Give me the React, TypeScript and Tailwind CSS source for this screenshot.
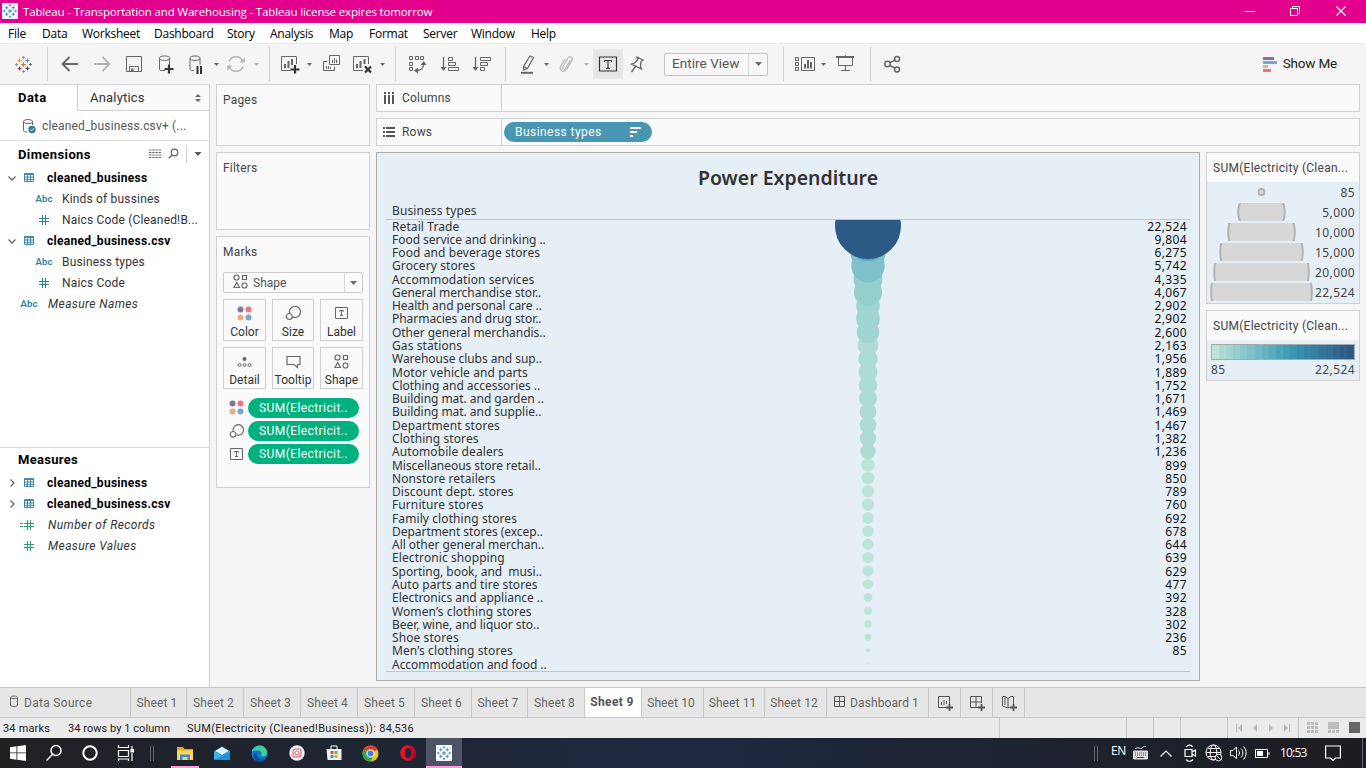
import React from "react";

const PALETTE = [
  "#bce4d8", "#aedcd5", "#a1d5d2", "#95cecf", "#89c8cc", "#7ec1ca", "#72bac6", "#66b2c2", "#59acbe", "#4ba5ba",
  "#419eb6", "#3b96b2", "#358ead", "#3586a7", "#347ea1", "#32779b", "#316f96", "#2f6790", "#2d608a", "#2c5985",
];

const ROWS: [string, number | null][] = [
  ["Retail Trade", 22524],
  ["Food service and drinking ..", 9804],
  ["Food and beverage stores", 6275],
  ["Grocery stores", 5742],
  ["Accommodation services", 4335],
  ["General merchandise stor..", 4067],
  ["Health and personal care ..", 2902],
  ["Pharmacies and drug stor..", 2902],
  ["Other general merchandis..", 2600],
  ["Gas stations", 2163],
  ["Warehouse clubs and sup..", 1956],
  ["Motor vehicle and parts", 1889],
  ["Clothing and accessories ..", 1752],
  ["Building mat. and garden ..", 1671],
  ["Building mat. and supplie..", 1469],
  ["Department stores", 1467],
  ["Clothing stores", 1382],
  ["Automobile dealers", 1236],
  ["Miscellaneous store retail..", 899],
  ["Nonstore retailers", 850],
  ["Discount dept. stores", 789],
  ["Furniture stores", 760],
  ["Family clothing stores", 692],
  ["Department stores (excep..", 678],
  ["All other general merchan..", 644],
  ["Electronic shopping", 639],
  ["Sporting, book, and  musi..", 629],
  ["Auto parts and tire stores", 477],
  ["Electronics and appliance ..", 392],
  ["Women’s clothing stores", 328],
  ["Beer, wine, and liquor sto..", 302],
  ["Shoe stores", 236],
  ["Men’s clothing stores", 85],
  ["Accommodation and food ..", null],
];

const PITCH = 451 / 34;

type IconProps = { children: React.ReactNode; size?: number; className?: string };

function Icon({ children, size = 24, className = "" }: IconProps) {
  return (
    <svg
      width={size}
      height={size}
      viewBox={`0 0 ${size} ${size}`}
      fill="none"
      stroke="#666"
      className={`block shrink-0 overflow-visible ${className}`}
    >
      {children}
    </svg>
  );
}

function Cell({ w, children }: { w: string; children: React.ReactNode }) {
  return <div className={`${w} h-full shrink-0 flex items-center justify-center`}>{children}</div>;
}

function Sep({ m }: { m: string }) {
  return <div className={`w-px h-[34px] shrink-0 bg-[#cfcfcf] ${m}`} />;
}

function Caret({ light = false }: { light?: boolean }) {
  return (
    <svg width="5" height="3" viewBox="0 0 5 3" className="block">
      <path d="M0 0H5L2.5 3Z" fill={light ? "#b4b4b4" : "#666"} />
    </svg>
  );
}

/* Tableau mark: a large centre cross surrounded by smaller ones */
function TableauMark({ mono = false, size = 17 }: { mono?: boolean; size?: number }) {
  const c = (x: string) => (mono ? "#3a80aa" : x);
  const cross = (x: number, y: number, r: number, col: string, w: number) => (
    <path d={`M${x - r} ${y}H${x + r}M${x} ${y - r}V${y + r}`} stroke={c(col)} strokeWidth={w} />
  );
  return (
    <svg width={size} height={size} viewBox="0 0 17 17" fill="none" className="block shrink-0">
      {cross(8.5, 8.5, 2.5, "#e8762c", 1.1)}
      {cross(4.5, 4.5, 2, "#eb9129", 1)}
      {cross(12.5, 4.5, 2, "#59879b", 1)}
      {cross(4.5, 12.5, 2, "#c72035", 1)}
      {cross(12.5, 12.5, 2, "#1f447e", 1)}
      {cross(8.5, 1.5, 1.5, "#7099a6", 0.9)}
      {cross(8.5, 15.5, 1.5, "#7b85b1", 0.9)}
      {cross(1.5, 8.5, 1.5, "#5b9bb5", 0.9)}
      {cross(15.5, 8.5, 1.5, "#5b6591", 0.9)}
    </svg>
  );
}

const MENUS: [string, string][] = [
  ["File", "w-[34px]"], ["Data", "w-[40px]"], ["Worksheet", "w-[72px]"], ["Dashboard", "w-[73px]"],
  ["Story", "w-[43px]"], ["Analysis", "w-[59px]"], ["Map", "w-[40px]"], ["Format", "w-[54px]"],
  ["Server", "w-[48px]"], ["Window", "w-[60px]"], ["Help", "w-[40px]"],
];

function TitleBar() {
  return (
    <div className="h-[23px] shrink-0 bg-[#e3008c] flex items-center text-white font-['Open_Sans',sans-serif]">
      <div className="ml-[2px] w-[16px] h-[16px] bg-[#f3f6f8] flex items-center justify-center -mt-[2px]">
        <TableauMark mono size={14} />
      </div>
      <span className="ml-[5px] text-[11.5px] tracking-[-0.150px] whitespace-pre leading-none mt-px">
        Tableau - Transportation and Warehousing - Tableau license expires tomorrow
      </span>
      <div className="ml-auto flex items-center mr-[17px] -mt-[2px]">
        <svg width="104" height="12" viewBox="0 0 104 12" fill="none" stroke="#fff" className="block">
          <path d="M0 6.5H10" />
          <path d="M45.5 3.5H52.5V10.5H45.5ZM47.5 3.5V1.5H54.5V8.5H52.5" />
          <path d="M91.5 1.5L100.5 10.5M100.5 1.5L91.5 10.5" strokeWidth="1.1" />
        </svg>
      </div>
    </div>
  );
}

function MenuBar() {
  return (
    <div className="h-[20px] shrink-0 bg-white flex items-center pt-[2px] pl-[8px] text-[12px] text-black tracking-[-0.25px] leading-none font-['Open_Sans',sans-serif]">
      {MENUS.map(([t, w]) => (
        <div key={t} className={`${w} shrink-0`}>{t}</div>
      ))}
    </div>
  );
}

function Toolbar() {
  return (
    <div className="h-[41px] shrink-0 bg-[#f5f5f5] border-t border-[#ececec] flex items-center text-[#333]">
      <Cell w="w-[47px]"><TableauMark size={17} /></Cell>
      <Sep m="mr-[6px]" />
      <Cell w="w-[32px]"><Icon><path d="M4.5 12H20M11.5 5L4.5 12L11.5 19" strokeWidth="1.8" /></Icon></Cell>
      <Cell w="w-[32px]"><Icon><path d="M4 12H19.5M12.5 5L19.5 12L12.5 19" stroke="#b4b4b4" strokeWidth="1.8" /></Icon></Cell>
      <Cell w="w-[32px]"><Icon><path d="M4.5 4.5H19.5V19.5H4.5ZM7.5 19.5V14.5H16.5V19.5" /><path d="M9 16.5H11.5V19.5H9Z" fill="#666" stroke="none" /></Icon></Cell>
      <Cell w="w-[32px]"><Icon>
        <path d="M11 18.5H7C5.5 18.3 5.5 17.5 5.5 17V6.5M15.5 6.5V12.5" />
        <ellipse cx="10.5" cy="6.2" rx="5" ry="2.2" />
        <path d="M15 12.5V21.5M10.500 17H19.5" stroke="#333" strokeWidth="2.2" />
      </Icon></Cell>
      <Cell w="w-[28px]"><Icon>
        <path d="M10 18.500H7.5C6 18.3 6 17.5 6 17V6.5M16 6.5V12.5" />
        <ellipse cx="11" cy="6.2" rx="5" ry="2.2" />
        <path d="M13.500 14V22M17 14V22" stroke="#333" strokeWidth="2" />
      </Icon></Cell>
      <Cell w="w-[12px]"><Caret /></Cell>
      <Cell w="w-[28px]"><Icon>
        <path d="M5 9.500A7.500 7.500 0 0 1 19 9.500M19 14.500A7.500 7.500 0 0 1 5 14.500" stroke="#b4b4b4" strokeWidth="1.5" />
        <path d="M20.800 5.500V10.500H15.500ZM3.200 18.500V13.500H8.500Z" fill="#b4b4b4" stroke="none" />
      </Icon></Cell>
      <Cell w="w-[13px]"><Caret light /></Cell>
      <Sep m="ml-[6px] mr-[5px]" />
      <Cell w="w-[28px]"><Icon>
        <path d="M13.5 18.5H4.5V4.5H19.5V12" />
        <path d="M8 12V16M11.500 9V16M15 7V13" strokeWidth="2" />
        <path d="M18 13V21.500M13.500 17.500H22.500" stroke="#333" strokeWidth="2.2" />
      </Icon></Cell>
      <Cell w="w-[13px]"><Caret /></Cell>
      <Cell w="w-[30px]"><Icon>
        <path d="M10.500 3.500H20.500V12.500H10.500ZM8.500 9.500H4.500V18.500H15.500V14.500" />
        <path d="M13.500 8V11M15.500 6V11M17.500 7.500V11M7.500 14V17M9.500 14V17M11.500 15V17" />
      </Icon></Cell>
      <Cell w="w-[30px]"><Icon>
        <path d="M14 18.500H4.500V4.500H19.500V12" />
        <path d="M8 12V16M11.500 9V16M15.500 7V12" strokeWidth="2" />
        <path d="M16 14.500L22 20.500M22 14.500L16 20.500" stroke="#333" strokeWidth="2.200" />
      </Icon></Cell>
      <Cell w="w-[12px]"><Caret /></Cell>
      <Sep m="ml-[7px] mr-[5px]" />
      <Cell w="w-[32px]"><Icon>
        <path d="M4.500 4.500H7.500V7.500H4.500ZM10.500 4.500H13.500V7.500H10.500ZM15.500 4.500H18.500V7.500H15.500ZM4.500 10.500H7.500V13.500H4.500ZM4.500 15.500H7.500V18.500H4.500Z" />
        <path d="M18.500 12C18.500 16 16 18.500 11 18.500" strokeWidth="1.3" />
        <path d="M15.500 13L18.800 9L21.500 13ZM13 15.500L9 18.500L13 21.500Z" fill="#666" stroke="none" />
      </Icon></Cell>
      <Cell w="w-[32px]"><Icon>
        <path d="M6.500 5V18" strokeWidth="1.300" /><path d="M3.500 15L6.500 19L9.500 15Z" fill="#666" stroke="none" />
        <path d="M11.500 5.500H15.500V8.500H11.500ZM11.500 10.500H18.500V13.500H11.500ZM11.500 15.500H21.500V18.500H11.500Z" />
      </Icon></Cell>
      <Cell w="w-[32px]"><Icon>
        <path d="M6.500 5V18" strokeWidth="1.300" /><path d="M3.500 15L6.500 19L9.500 15Z" fill="#666" stroke="none" />
        <path d="M11.500 5.500H21.500V8.500H11.500ZM11.500 10.500H18.500V13.500H11.500ZM11.500 15.500H15.500V18.500H11.500Z" />
      </Icon></Cell>
      <Sep m="ml-[8px] mr-[8px]" />
      <Cell w="w-[26px]"><Icon>
        <path d="M15 4L18.500 5.500L12.500 16.500L8.500 18L8.500 14.500ZM8.500 14.500L12.500 16.500" strokeWidth="1.200" />
        <path d="M6 20.800H18" strokeWidth="2" />
      </Icon></Cell>
      <Cell w="w-[12px]"><Caret /></Cell>
      <Cell w="w-[28px]"><Icon>
        <path d="M16.500 8L11.500 16.500C10.500 18 8 17 9 14.800L14 6C15.500 3.500 19.500 5 18 8.500L12.500 17.500C10 21 4.500 18.500 7 13.800L11 7" stroke="#b4b4b4" strokeWidth="1.200" />
      </Icon></Cell>
      <Cell w="w-[13px]"><Caret light /></Cell>
      <div className="w-[30px] h-[30px] shrink-0 bg-[#e6e6e6] flex items-center justify-center">
        <Icon>
          <path d="M3.500 5H20.500V19H3.500Z" stroke="#333" strokeWidth="1.200" />
          <path d="M8.500 10V8.500H15.500V10M12 8.500V16.500M10 16.500H14" stroke="#444" strokeWidth="1.200" />
        </Icon>
      </div>
      <Cell w="w-[28px]"><Icon>
        <path d="M12 5L18 8L16 9.500L15.500 14L16.500 17L6.500 12L9.500 11L12.500 8ZM10.500 14.500L6.500 20" strokeWidth="1.300" />
      </Icon></Cell>
      <div className="ml-[13px] w-[104px] h-[23px] shrink-0 border border-[#c4c4c4] rounded-[2px] bg-[#f8f8f8] flex items-center">
        <span className="flex-1 pl-[7px] text-[13.500px] leading-none text-[#555] font-['Roboto',sans-serif] tracking-[0.050px] whitespace-nowrap">Entire View</span>
        <div className="w-[19px] h-full border-l border-[#d8d8d8] flex items-center justify-center">
          <svg width="7" height="4" viewBox="0 0 7 4"><path d="M0 0H7L3.500 4Z" fill="#666" /></svg>
        </div>
      </div>
      <Sep m="ml-[15px] mr-[8px]" />
      <Cell w="w-[26px]"><Icon>
        <path d="M2.500 5.500H5.500V8.500H2.500ZM2.500 10.500H5.500V13.500H2.500ZM2.500 15.500H5.500V18.500H2.500ZM8.500 5.500H21.500V18.500H8.500Z" />
        <path d="M12 12V16.500M15 8V16.500M18 10V16.500" strokeWidth="2" />
      </Icon></Cell>
      <Cell w="w-[11px]"><Caret /></Cell>
      <Cell w="w-[32px]"><Icon>
        <path d="M3 5H21" strokeWidth="2" /><path d="M5.500 5V13.500H19.500V5M12.500 13.500V18.500M8 18.500H17M12.500 3V5" />
      </Icon></Cell>
      <Sep m="ml-[9px] mr-[5px]" />
      <Cell w="w-[32px]"><Icon>
        <g strokeWidth="1.500"><circle cx="7.500" cy="12" r="2.700" /><circle cx="17" cy="7" r="2.500" /><circle cx="17" cy="17.500" r="2.500" />
        <path d="M10 10.700L14.700 8.300M10 13.300L14.700 16" /></g>
      </Icon></Cell>
      <div className="ml-auto mr-[29px] flex items-center gap-[5px]">
        <svg width="15" height="15" viewBox="0 0 15 15" className="block">
          <path d="M0 0H11V3H0Z" fill="#83759a" /><path d="M0 4H14V7H0Z" fill="#7fa3cf" />
          <path d="M0 8H5V11H0Z" fill="#f1a98a" /><path d="M0 12H8V15H0Z" fill="#f27183" />
        </svg>
        <span className="text-[13.500px] leading-none text-[#222] font-['Roboto',sans-serif] tracking-[-0.200px] whitespace-nowrap">Show Me</span>
      </div>
    </div>
  );
}

function TableIcon() {
  return (
    <svg width="10" height="9" viewBox="0 0 10 9" fill="none" stroke="#2f7d9b" className="block">
      <path d="M.5 .500H9.500V8.500H.500ZM0 1.500H10M0 4H10M0 6.300H10M3.500 2V8.500M6.500 2V8.500" strokeWidth=".9" />
    </svg>
  );
}

function Hash({ color, eq = false }: { color: string; eq?: boolean }) {
  return (
    <svg width="10" height="10" viewBox="0 0 10 10" fill="none" stroke={color} className="block overflow-visible">
      <path d="M3.500 0V10M6.500 0V10M0 3.500H10M0 6.500H10" strokeWidth="1.050" />
      {eq && <path d="M-4 3.500H-1M-4 6.500H-1" />}
    </svg>
  );
}

function Abc() {
  return <span className="text-[9.500px] font-semibold text-[#2f7d9b] leading-none tracking-[0.100px]">Abc</span>;
}

function Folder({ name, open = false }: { name: string; open?: boolean }) {
  return (
    <div className="h-[21px] flex items-center">
      <div className="w-[23px] flex justify-center">
        <svg width="8" height="8" viewBox="0 0 8 8" fill="none" stroke="#666" strokeWidth="1.300" className="block">
          <path d={open ? "M.500 2.500L4 6L7.500 2.500" : "M2.500 .500L6 4L2.500 7.500"} />
        </svg>
      </div>
      <div className="w-[24px] pl-px"><TableIcon /></div>
      <span className="text-[12px] font-bold text-black tracking-[0.280px] whitespace-nowrap">{name}</span>
    </div>
  );
}

function Field({ name, icon, child = true, italic = false }: { name: string; icon: React.ReactNode; child?: boolean; italic?: boolean }) {
  return (
    <div className="h-[21px] flex items-center">
      <div className={`${child ? "w-[62px] pl-[26px]" : "w-[47px] pl-[11px]"} shrink-0 flex justify-center`}>
        <div className="w-[36px] flex justify-center">{icon}</div>
      </div>
      <span className={`text-[12px] text-[#333] whitespace-nowrap ${italic ? "italic tracking-[0.400px] pl-px" : "tracking-[0.180px]"}`}>{name}</span>
    </div>
  );
}

function DataPane() {
  return (
    <div className="w-[210px] shrink-0 bg-white border-r border-[#d0d0d0] flex flex-col font-['Roboto',sans-serif] leading-none">
      <div className="h-[27px] shrink-0 flex border-t border-[#d4d4d4]">
        <div className="w-[77px] pl-[18px] pb-[2px] flex items-center text-[13px] font-bold text-black tracking-[0.450px]">Data</div>
        <div className="flex-1 bg-[#fafafa] border-l border-b border-[#d0d0d0] pl-[12px] pr-[8px] flex items-center justify-between text-[13px] text-[#333] tracking-[0.200px]">
          Analytics
          <svg width="6" height="8" viewBox="0 0 6 8" className="block"><path d="M0 3L3 0L6 3ZM0 5L3 8L6 5Z" fill="#666" /></svg>
        </div>
      </div>
      <div className="h-[30px] shrink-0 border-b border-[#e0e0e0] flex items-center pl-[22px]">
        <svg width="14" height="16" viewBox="0 0 14 16" fill="none" stroke="#666" className="block">
          <ellipse cx="6" cy="3.500" rx="4.500" ry="2" /><path d="M1.500 3.500V12.500C1.500 13.500 3 14 5 14M10.500 3.500V7" />
          <circle cx="10" cy="11.500" r="3.700" fill="#2f7d9b" stroke="none" /><path d="M8.300 11.500L9.700 12.900L12 10.300" stroke="#fff" />
        </svg>
        <span className="ml-[6px] text-[12px] text-[#555] tracking-[0.170px] whitespace-nowrap">cleaned_business.csv+ (...</span>
      </div>
      <div className="h-[26px] shrink-0 flex items-center pl-[18px] pr-[7px]">
        <span className="flex-1 text-[13px] font-bold text-black tracking-[0.400px]">Dimensions</span>
        <svg width="54" height="18" viewBox="0 0 54 18" fill="none" stroke="#666" className="block">
          <path d="M1 5H13M1 7.500H13M1 10H13M1 12.500H13" strokeDasharray="2.400 .800" strokeWidth="1.100" />
          <circle cx="26.500" cy="7.500" r="3.300" strokeWidth="1.200" /><path d="M24.200 10L20.700 13.200" strokeWidth="1.500" />
          <path d="M38.500 0V18" stroke="#ccc" /><path d="M46.500 7H53.500L50 11Z" fill="#555" stroke="none" />
        </svg>
      </div>
      <div className="h-[280px] shrink-0 flex flex-col">
        <Folder name="cleaned_business" open />
        <Field name="Kinds of bussines" icon={<Abc />} />
        <Field name="Naics Code (Cleaned!B..." icon={<Hash color="#2f7d9b" />} />
        <Folder name="cleaned_business.csv" open />
        <Field name="Business types" icon={<Abc />} />
        <Field name="Naics Code" icon={<Hash color="#2f7d9b" />} />
        <Field name="Measure Names" icon={<Abc />} child={false} italic />
      </div>
      <div className="flex-1 border-t border-[#dcdcdc]">
        <div className="h-[24px] flex items-center pb-[2px] pl-[18px] text-[13px] font-bold text-black tracking-[0.300px]">Measures</div>
        <Folder name="cleaned_business" />
        <Folder name="cleaned_business.csv" />
        <Field name="Number of Records" icon={<Hash color="#2e9b77" eq />} child={false} italic />
        <Field name="Measure Values" icon={<Hash color="#2e9b77" />} child={false} italic />
      </div>
    </div>
  );
}

function ColorDots() {
  return (
    <svg width="15" height="15" viewBox="0 0 15 15" className="block">
      <circle cx="3.500" cy="3.500" r="3" fill="#83759a" /><circle cx="11.500" cy="3.500" r="3" fill="#f27183" />
      <circle cx="3.500" cy="11.500" r="3" fill="#f1a97c" /><circle cx="11.500" cy="11.500" r="3" fill="#7fa3cf" />
    </svg>
  );
}
function SizeIcon() {
  return (
    <svg width="16" height="16" viewBox="0 0 16 16" fill="none" stroke="#666" strokeWidth="1.200" className="block">
      <path d="M4.500 8A5.600 5.600 0 1 1 7.800 12" /><circle cx="4.300" cy="11.500" r="3" />
    </svg>
  );
}
function LabelIcon() {
  return (
    <svg width="14" height="14" viewBox="0 0 14 14" fill="none" stroke="#666" className="block">
      <path d="M.500 1.500H12.500V12.500H.500ZM4.500 5.500V4.500H8.500V5.500M6.500 4.500V9.500M5 9.500H8" />
    </svg>
  );
}
function ShapeIcon() {
  return (
    <svg width="15" height="15" viewBox="0 0 15 15" fill="none" stroke="#666" strokeWidth="1.150" className="block">
      <circle cx="3.500" cy="3.500" r="2.500" /><path d="M9.500 1.500H13.500V5.500H9.500ZM1 13.500H6.500L3.700 8.500Z" /><circle cx="11.500" cy="11.500" r="2.500" />
    </svg>
  );
}
function DetailIcon() {
  return (
    <svg width="15" height="15" viewBox="0 0 15 15" fill="none" stroke="#666" className="block">
      <circle cx="7.500" cy="5" r="2" fill="#666" stroke="none" /><circle cx="2.500" cy="11" r="1.500" /><circle cx="7.500" cy="11" r="1.500" /><circle cx="12.500" cy="11" r="1.500" />
    </svg>
  );
}
function TooltipIcon() {
  return (
    <svg width="15" height="15" viewBox="0 0 15 15" fill="none" stroke="#666" strokeWidth="1.200" className="block">
      <path d="M1 2.500H14V10.500H11.500V13.500L8 10.500H1Z" />
    </svg>
  );
}

function MarkButton({ label, icon, w = "w-[42px]" }: { label: string; icon: React.ReactNode; w?: string }) {
  return (
    <div className={`${w} h-[42px] border border-[#cfcfcf] bg-[#fafafa] flex flex-col items-center pt-[5px]`}>
      <div className="h-[16px] flex items-center">{icon}</div>
      <span className="mt-[4px] text-[12px] leading-[14px] text-[#333] whitespace-nowrap">{label}</span>
    </div>
  );
}

function MarkPill({ icon }: { icon: React.ReactNode }) {
  return (
    <div className="flex items-center h-[23px] pl-[6px]">
      <div className="w-[15px] flex justify-center">{icon}</div>
      <div className="ml-[4px] w-[111px] h-[20px] rounded-full bg-[#00b180] flex items-center pl-[11px] text-white text-[12px] leading-none tracking-[0.420px]">
        SUM(Electricit..
      </div>
    </div>
  );
}

function Cards() {
  const card = "border border-[#d0d0d0] bg-[#fafafa] px-[6px]";
  return (
    <div className="w-[154px] ml-[6px] shrink-0 flex flex-col gap-[6px] font-['Roboto',sans-serif] text-[12px] leading-none text-[#444] tracking-[0.200px]">
      <div className={`${card} h-[62px] pt-[9px]`}>Pages</div>
      <div className={`${card} h-[78px] pt-[9px]`}>Filters</div>
      <div className={`${card} h-[252px] pt-[9px]`}>
        <div>Marks</div>
        <div className="mt-[14px] h-[21px] w-[140px] border border-[#cacaca] rounded-[2px] flex items-center">
          <div className="ml-[9px] -mt-[2px]"><ShapeIcon /></div>
          <span className="ml-[5px] flex-1 text-[#555] tracking-[0]">Shape</span>
          <div className="w-[18px] h-full border-l border-[#d8d8d8] flex items-center justify-center">
            <svg width="7" height="4" viewBox="0 0 7 4"><path d="M0 0H7L3.500 4Z" fill="#666" /></svg>
          </div>
        </div>
        <div className="mt-[6px] flex flex-wrap justify-between gap-y-[6px] tracking-[0]">
          <MarkButton label="Color" icon={<ColorDots />} w="w-[43px]" />
          <MarkButton label="Size" icon={<SizeIcon />} />
          <MarkButton label="Label" icon={<LabelIcon />} w="w-[43px]" />
          <MarkButton label="Detail" icon={<DetailIcon />} w="w-[43px]" />
          <MarkButton label="Tooltip" icon={<TooltipIcon />} />
          <MarkButton label="Shape" icon={<ShapeIcon />} w="w-[43px]" />
        </div>
        <div className="mt-[7px]">
          <MarkPill icon={<ColorDots />} />
          <MarkPill icon={<SizeIcon />} />
          <MarkPill icon={<LabelIcon />} />
        </div>
      </div>
    </div>
  );
}

function Shelves() {
  const shelf = "h-[28px] border border-[#d0d0d0] bg-[#fafafa] flex items-stretch";
  const label = "w-[125px] border-r border-[#d0d0d0] flex items-center pb-px";
  return (
    <div className="flex flex-col gap-[6px] font-['Roboto',sans-serif] text-[12px] leading-none text-[#444] tracking-[0.200px]">
      <div className={shelf}>
        <div className={`${label} pl-[7px] gap-[6px]`}>
          <svg width="12" height="12" viewBox="0 0 12 12" className="block" stroke="#555" strokeWidth="2"><path d="M1 0V2M5 0V2M9 0V2M1 3V12M5 3V12M9 3V12" /></svg>
          Columns
        </div>
      </div>
      <div className={shelf}>
        <div className={`${label} pl-[6px] gap-[7px]`}>
          <svg width="12" height="12" viewBox="0 0 12 12" className="block" stroke="#555" strokeWidth="2"><path d="M0 2H2M0 6H2M0 10H2M3 2H12M3 6H12M3 10H12" /></svg>
          Rows
        </div>
        <div className="self-center ml-[2px] w-[148px] h-[20px] rounded-full bg-[#4996b2] flex items-center justify-between pl-[11px] pr-[11px] text-white tracking-[0.450px]">
          Business types
          <svg width="11" height="10" viewBox="0 0 11 10" className="block" stroke="#fff" strokeWidth="2"><path d="M0 1H11M0 5H7M0 9H3" /></svg>
        </div>
      </div>
    </div>
  );
}

function Sheet() {
  const fmt = (v: number) => v.toLocaleString("en-US");
  const marks = ROWS.map(([, v], i) => {
    const value = v ?? 10;
    const bin = Math.min(19, Math.max(0, Math.floor(((value - 85) / 22439) * 20)));
    return { cy: PITCH * (i + 0.5) - 0.6, r: 33 * Math.sqrt(value / 22524), fill: PALETTE[bin] };
  }).reverse();
  return (
    <div className="w-[824px] h-[529px] shrink-0 border border-[#acacac] bg-[#e6eff6] px-[9px] flex flex-col font-['Noto_Sans',sans-serif] text-[#333]">
      <div className="h-[50px] flex items-center justify-center text-[19.500px] font-semibold leading-none">Power Expenditure</div>
      <div className="h-[17px] border-b border-[#c0c6ca] pl-[6px] text-[12px] leading-[16px] tracking-[0.100px]">Business types</div>
      <div className="h-[451px] flex">
        <div className="w-[214px] -mt-[0.500px] pl-[6px] grid grid-rows-[repeat(34,minmax(0,1fr))] text-[12px]">
          {ROWS.map(([name]) => (
            <div key={name} className={`leading-[13px] whitespace-pre ${name.endsWith("..") ? "tracking-[-0.040px]" : "tracking-[0.090px]"}`}>{name}</div>
          ))}
        </div>
        <svg width="536" height="451" viewBox="0 0 536 451" className="block shrink-0">
          {marks.map((m, i) => <circle key={i} cx="268" cy={m.cy} r={m.r} fill={m.fill} />)}
        </svg>
        <div className="flex-1 pr-[3px] -mt-[0.500px] grid grid-rows-[repeat(34,minmax(0,1fr))] text-[12px] text-[#111] text-right tracking-[0.350px]">
          {ROWS.map(([name, v]) => (
            <div key={name} className="leading-[13px]">{v === null ? "" : fmt(v)}</div>
          ))}
        </div>
      </div>
      <div className="h-px bg-[#c0c6ca]" />
    </div>
  );
}

const SIZE_STEPS: [string, number][] = [
  ["85", 4], ["5,000", 24.300], ["10,000", 34.300], ["15,000", 42.200], ["20,000", 48.300], ["22,524", 51.300],
];

function Legends() {
  const title = "bg-[#fafafa] flex items-center pl-[6px] text-[12px] text-[#444] tracking-[0.270px] font-['Roboto',sans-serif] whitespace-nowrap";
  return (
    <div className="w-[154px] flex flex-col gap-[6px] font-['Noto_Sans',sans-serif] text-[12px] leading-none text-[#444] tracking-[0.400px]">
      <div className="h-[152px] border border-[#d0d0d0] bg-[#e6eff6]">
        <div className={`h-[29px] ${title}`}>SUM(Electricity (Clean...</div>
        {SIZE_STEPS.map(([t, r], i) => (
          <div key={t} className="h-[20px] flex items-center justify-between pl-[2px] pr-[4px]">
            <svg width="105" height="18" viewBox="0 0 105 18" className="block shrink-0">
              <circle cx="52.500" cy="9" r={i === 0 ? 3 : r - 1} fill="#d7d7d7" stroke="#b3b3b3" strokeWidth={i === 0 ? 1.800 : 2} />
            </svg>
            <span className="shrink-0 -ml-[6px] mt-[2px]">{t}</span>
          </div>
        ))}
      </div>
      <div className="h-[71px] border border-[#d0d0d0] bg-[#e6eff6]">
        <div className={`h-[29px] ${title}`}>SUM(Electricity (Clean...</div>
        <div className="mt-[4px] mx-[4px] h-[16px] border border-[#a8a8a4] flex">
          {PALETTE.map((c) => <div key={c} className="flex-1" style={{ backgroundColor: c }} />)}
        </div>
        <div className="mt-[4px] px-[4px] flex justify-between"><span>85</span><span>22,524</span></div>
      </div>
    </div>
  );
}

const TABS: [string, string][] = [
  ["Sheet 1", "w-[56px]"], ["Sheet 2", "w-[57px]"], ["Sheet 3", "w-[57px]"], ["Sheet 4", "w-[57px]"],
  ["Sheet 5", "w-[57px]"], ["Sheet 6", "w-[57px]"], ["Sheet 7", "w-[56px]"], ["Sheet 8", "w-[57px]"],
  ["Sheet 9", "w-[57px]"], ["Sheet 10", "w-[62px]"], ["Sheet 11", "w-[61px]"], ["Sheet 12", "w-[62px]"],
];

function TabBar() {
  const base = "h-full shrink-0 border-r border-[#c8c8c8] flex items-center justify-center whitespace-nowrap";
  return (
    <div className="h-[31px] shrink-0 bg-[#e6e6e6] border-y border-[#c8c8c8] flex items-center font-['Roboto',sans-serif] text-[12px] leading-none text-[#666] tracking-[0.100px]">
      <div className="w-[131px] h-full shrink-0 border-r border-[#c8c8c8] flex items-center pl-[9px] gap-[5px]">
        <svg width="10" height="13" viewBox="0 0 10 13" fill="none" stroke="#666" className="block -mt-[2px]">
          <path d="M1.500 2.500V10C1.500 12 8.500 12 8.500 10V2.500C8.500 .500 1.500 .500 1.500 2.500C1.500 4 8.500 4 8.500 2.500" />
        </svg>
        <span className="tracking-[0.300px]">Data Source</span>
      </div>
      {TABS.map(([t, w]) => (
        <div key={t} className={`${base} ${w} ${t === "Sheet 9" ? "bg-white font-bold text-[#555] tracking-[0.350px] pr-[2px] pb-[2px]" : "pr-[3px]"}`}>{t}</div>
      ))}
      <div className={`${base} w-[102px] gap-[5px] pr-[2px]`}>
        <svg width="11" height="11" viewBox="0 0 11 11" fill="none" stroke="#555" className="block shrink-0 -mt-[2px]"><path d="M.500 .500H10.500V10.500H.500ZM.500 5.500H10.500M5.500 .500V10.500" /></svg>
        Dashboard 1
      </div>
      <div className={`${base} w-[32px]`}>
        <Icon size={16}><path d="M10 12.500H1.500V1.500H12.500V9M4.500 7V10M7 5V10M9.500 6V9" stroke="#555" /><path d="M12.500 9V16M9 12.500H16" stroke="#555" strokeWidth="1.800" /></Icon>
      </div>
      <div className={`${base} w-[32px]`}>
        <Icon size={16}><path d="M9 12.500H1.500V1.500H12.500V8M1.500 7H12.500M7 1.500V12.500" stroke="#555" /><path d="M12.500 9V16M9 12.500H16" stroke="#555" strokeWidth="1.800" /></Icon>
      </div>
      <div className={`${base} w-[32px]`}>
        <Icon size={16}><path d="M9 12L7 13L1.500 11V1.500L4 1.500L7 3.500L10 1.500H12.500V9M7 3.500V13M4 1.500V10" stroke="#555" /><path d="M12.500 9V16M9 12.500H16" stroke="#555" strokeWidth="1.800" /></Icon>
      </div>
    </div>
  );
}

function StatusBar() {
  const d = "h-full border-l border-[#c8c8c8] shrink-0";
  return (
    <div className="h-[20px] shrink-0 bg-[#ebebeb] flex items-center font-['Roboto',sans-serif] text-[11px] leading-none text-[#222] tracking-[0.180px]">
      <span className="w-[65px] pl-[3px] shrink-0">34 marks</span>
      <span className="w-[119px] pl-[3px] shrink-0 tracking-[0.050px]">34 rows by 1 column</span>
      <span className="pl-[3px] flex-1 tracking-[0.290px]">SUM(Electricity (Cleaned!Business)): 84,536</span>
      <div className={`${d} w-[127px]`} />
      <div className={`${d} w-[27px]`} />
      <div className={`${d} w-[27px]`} />
      <div className={`${d} w-[47px]`} />
      <div className={`${d} w-[71px] flex items-center`}>
        <svg width="70" height="8" viewBox="0 0 70 8" className="block" fill="#b8b8b8">
          <path d="M8 0H9V8H8ZM14 0V8L10 4ZM29 0V8L25 4ZM41 0V8L45 4ZM56 0V8L60 4ZM61 0H62V8H61Z" />
        </svg>
      </div>
      <div className={`${d} w-[68px] flex items-center`}>
        <svg width="66" height="12" viewBox="0 0 66 12" className="block" fill="#bcbcbc">
          <path d="M8 0h3v3h-3zM12 0h3v3h-3zM16 0h3v3h-3zM8 4h3v3h-3zM12 4h3v3h-3zM16 4h3v3h-3zM8 8h3v3h-3zM12 8h3v3h-3zM16 8h3v3h-3zM29 0h11v7h-11zM29 8h3v3h-3zM33 8h3v3h-3zM37 8h3v3h-3z" />
          <rect x="50" y="0" width="11" height="11" fill="#666" />
        </svg>
      </div>
    </div>
  );
}

function Taskbar() {
  const w = "#fff";
  return (
    <div className="h-[30px] shrink-0 bg-linear-to-r from-[#1f2023] via-[#1e2940] to-[#1c1d20] flex items-center">
      <Cell w="w-[36px]">
        <svg width="16" height="16" viewBox="0 0 16 16" className="block" fill={w}><path d="M0 2.200L6.500 1.300V7.500H0ZM7.300 1.200L16 0V7.500H7.300ZM0 8.300H6.500V14.700L0 13.800ZM7.300 8.300H16V16L7.300 14.800Z" /></svg>
      </Cell>
      <Cell w="w-[36px]">
        <svg width="18" height="18" viewBox="0 0 18 18" className="block" fill="none" stroke={w} strokeWidth="1.500"><circle cx="11" cy="6.500" r="5" /><path d="M7.500 10.500L1.500 16.500" /></svg>
      </Cell>
      <Cell w="w-[36px]">
        <svg width="16" height="16" viewBox="0 0 16 16" className="block" fill="none" stroke={w} strokeWidth="2"><circle cx="8" cy="8" r="6.700" /></svg>
      </Cell>
      <Cell w="w-[36px]">
        <svg width="18" height="18" viewBox="0 0 18 18" className="block" fill="none" stroke={w} strokeWidth="1.200"><path d="M1.500 1V3.500H11.500V1M1.500 6.500H11.500V12.500H1.500ZM1.500 17V15H11.500V17M15 2V5M15 9V17" /><path d="M14 5.500H16.500V8H14Z" fill={w} /></svg>
      </Cell>
      <Cell w="w-[23px]"><svg width="5" height="15" viewBox="0 0 5 15" className="block ml-[-7px]" stroke="#666"><path d="M.500 0V15M3.500 0V15" /></svg></Cell>
      <div className="w-[36px] h-full flex flex-col items-center">
        <div className="flex-1 flex items-center">
          <svg width="16" height="15" viewBox="0 0 16 15" className="block mt-[2px]"><path d="M0 1H6L7.500 3H16V14H0Z" fill="#e8a917" /><path d="M0 4.500H16V14H0Z" fill="#fcd462" /><path d="M3 14V8.500H13V14H10.500V11H5.500V14Z" fill="#3f8bd5" /></svg>
        </div>
        <div className="w-[28px] h-[2px] bg-[#ff9bd8]" />
      </div>
      <Cell w="w-[37px]"><svg width="16" height="16" viewBox="0 0 16 16" className="block"><path d="M0 6L8 1L16 6V15H0Z" fill="#0f6cbd" /><path d="M1 6L8 2L15 6L8 10Z" fill="#e7f3fb" /><path d="M0 6L8 10.500L16 6V15H0Z" fill="#35b4f0" /><path d="M0 15L16 7V15Z" fill="#1a93e0" /></svg></Cell>
      <Cell w="w-[38px]">
        <svg width="17" height="17" viewBox="0 0 17 17" className="block">
          <circle cx="8.500" cy="8.500" r="8" fill="#1278c8" />
          <path d="M.700 7C2 1 9 -1 13 2C16.500 4.500 17.500 9.500 14 10.800C12 11.500 10 11 10 10C11.500 8.500 10 5.500 7 5.500C4 5.500 1.500 6 .700 7Z" fill="#3fcf8e" />
          <path d="M.700 7C2 1.500 8 0 11 2.500C7 2 3 4 .700 7Z" fill="#2bc0e4" />
          <path d="M6 7.500C4.500 11 8 15 13.500 13.500C11 17.500 4 17 2.500 12C2 9 4 7.500 6 7.500Z" fill="#0c4f9c" />
        </svg>
      </Cell>
      <Cell w="w-[37px]">
        <svg width="16" height="16" viewBox="0 0 16 16" className="block"><circle cx="8" cy="8" r="7.700" fill="#f5eef2" /><rect x="4" y="4" width="8" height="8" rx="2.300" fill="none" stroke="#d6608a" strokeWidth="1.100" /><circle cx="8" cy="8" r="2" fill="none" stroke="#e0805a" strokeWidth="1.100" /></svg>
      </Cell>
      <Cell w="w-[37px]">
        <svg width="16" height="16" viewBox="0 0 16 16" className="block"><path d="M5 4V1H11V4" fill="none" stroke="#fff" /><path d="M.500 4H15.500V15H1.500Z" fill="#f2f2f2" /><path d="M4.500 6H7.500V9H4.500Z" fill="#e8502a" /><path d="M8.500 6H11.500V9H8.500Z" fill="#6fb52c" /><path d="M4.500 10H7.500V13H4.500Z" fill="#1b9be0" /><path d="M8.500 10H11.500V13H8.500Z" fill="#f4b400" /></svg>
      </Cell>
      <Cell w="w-[37px]">
        <svg width="17" height="17" viewBox="0 0 17 17" className="block"><circle cx="8.500" cy="8.500" r="8" fill="#f9c513" /><path d="M8.500 8.500L1.600 4.500A8 8 0 0 1 15.400 4.500Z" fill="#e33b2e" /><path d="M8.500 8.500L1.600 4.500A8 8 0 0 0 8.500 16.500L12 10.500Z" fill="#2da44e" /><circle cx="8.500" cy="8.500" r="4" fill="#fff" /><circle cx="8.500" cy="8.500" r="3" fill="#3b7ded" /></svg>
      </Cell>
      <Cell w="w-[37px]">
        <svg width="16" height="16" viewBox="0 0 16 16" className="block"><circle cx="8" cy="8" r="7.800" fill="#e8132b" /><ellipse cx="8" cy="8" rx="3.200" ry="5.300" fill="#1e2940" /><path d="M8 .300C13 .300 15.800 4 15.800 8S13 15.700 8 15.700C10 14 11.200 11 11.200 8S10 2 8 .300Z" fill="#a70014" opacity=".6" /></svg>
      </Cell>
      <div className="w-[36px] h-full bg-[#4b5365] flex flex-col items-center">
        <div className="flex-1 flex items-center"><div className="w-[16px] h-[16px] bg-[#f3f6f8] flex items-center justify-center mt-[2px]"><TableauMark mono size={14} /></div></div>
        <div className="w-full h-[2px] bg-[#ff9bd8]" />
      </div>
      <div className="ml-auto flex items-center h-full">
        <svg width="5" height="15" viewBox="0 0 5 15" className="block" stroke="#666"><path d="M.500 0V15M3.500 0V15" /></svg>
        <span className="ml-[12px] w-[21px] text-[12px] leading-none text-white tracking-[-0.500px] -mt-[4px] font-['Open_Sans',sans-serif]">EN</span>
        <svg width="17" height="16" viewBox="0 0 17 16" className="block" fill="none" stroke="#ddd">
          <path d="M3 4C6 1 8 4.500 10 3S12 1 14 1.500" /><path d="M1.500 6H15.500V14H1.500Z" fill="#ddd" /><path d="M3 8H14M3 10H14" stroke="#444" strokeDasharray="1 1" /><path d="M5 12.500H12" stroke="#444" />
        </svg>
        <Cell w="w-[34px]"><svg width="12" height="7" viewBox="0 0 12 7" fill="none" stroke="#fff" strokeWidth="1.200" className="block"><path d="M.500 6.500L6 1L11.500 6.500" /></svg></Cell>
        <Cell w="w-[14px]"><svg width="14" height="18" viewBox="0 0 14 18" fill="none" stroke="#fff" strokeWidth="1.200" className="block"><path d="M3 3C5 .500 8 .500 10 3M3 15.500C5 17.800 8 17.800 10 15.500M2 5.500H9V12.500H2ZM9 8L12.500 6V12L9 10" /></svg></Cell>
        <Cell w="w-[34px]"><svg width="18" height="18" viewBox="0 0 18 18" fill="none" stroke="#fff" className="block"><circle cx="8.500" cy="8.500" r="7.500" /><ellipse cx="8.500" cy="8.500" rx="3.300" ry="7.500" /><path d="M1 8.500H16M2 4.500H15M2 12.500H10" /><circle cx="13.500" cy="13.500" r="3.300" fill="#1d212b" /><path d="M11.500 11.500L15.500 15.500" /></svg></Cell>
        <Cell w="w-[14px]"><svg width="17" height="16" viewBox="0 0 17 16" fill="none" stroke="#fff" className="block shrink-0"><path d="M.500 5.500H3L6.500 2V13.500L3 10.500H.500ZM8.500 5.500C9.800 7 9.800 9 8.500 10.500M11 3.500C13.500 6 13.500 10 11 12.500M13.500 1.500C17 5.500 17 10.500 13.500 14.500" /></svg></Cell>
        <Cell w="w-[34px]"><svg width="15" height="9" viewBox="0 0 15 9" fill="none" stroke="#fff" className="block"><path d="M.500 .500H12.500V8.500H.500ZM14 3V6" /><path d="M2 2H8V7H2Z" fill="#fff" stroke="none" /></svg></Cell>
        <span className="w-[32px] text-[12px] leading-none text-white tracking-[-0.800px] font-['Open_Sans',sans-serif] ml-px">10:53</span>
        <Cell w="w-[41px]"><svg width="16" height="17" viewBox="0 0 16 17" fill="none" stroke="#fff" strokeWidth="1.200" className="block"><path d="M.600 1H15.400V13H10.500L8 15.500L5.500 13H.600Z" /></svg></Cell>
        <div className="ml-[9px] w-px h-full bg-[#666] mr-[3px]" />
      </div>
    </div>
  );
}

export default function App() {
  return (
    <div className="w-[1366px] h-[768px] overflow-hidden flex flex-col bg-[#f5f5f5]">
      <TitleBar />
      <MenuBar />
      <Toolbar />
      <div className="h-[603px] shrink-0 flex">
        <DataPane />
        <Cards />
        <div className="ml-[6px] w-[984px] shrink-0 flex flex-col gap-[6px]">
          <Shelves />
          <div className="flex gap-[6px]">
            <Sheet />
            <Legends />
          </div>
        </div>
      </div>
      <TabBar />
      <StatusBar />
      <Taskbar />
    </div>
  );
}
